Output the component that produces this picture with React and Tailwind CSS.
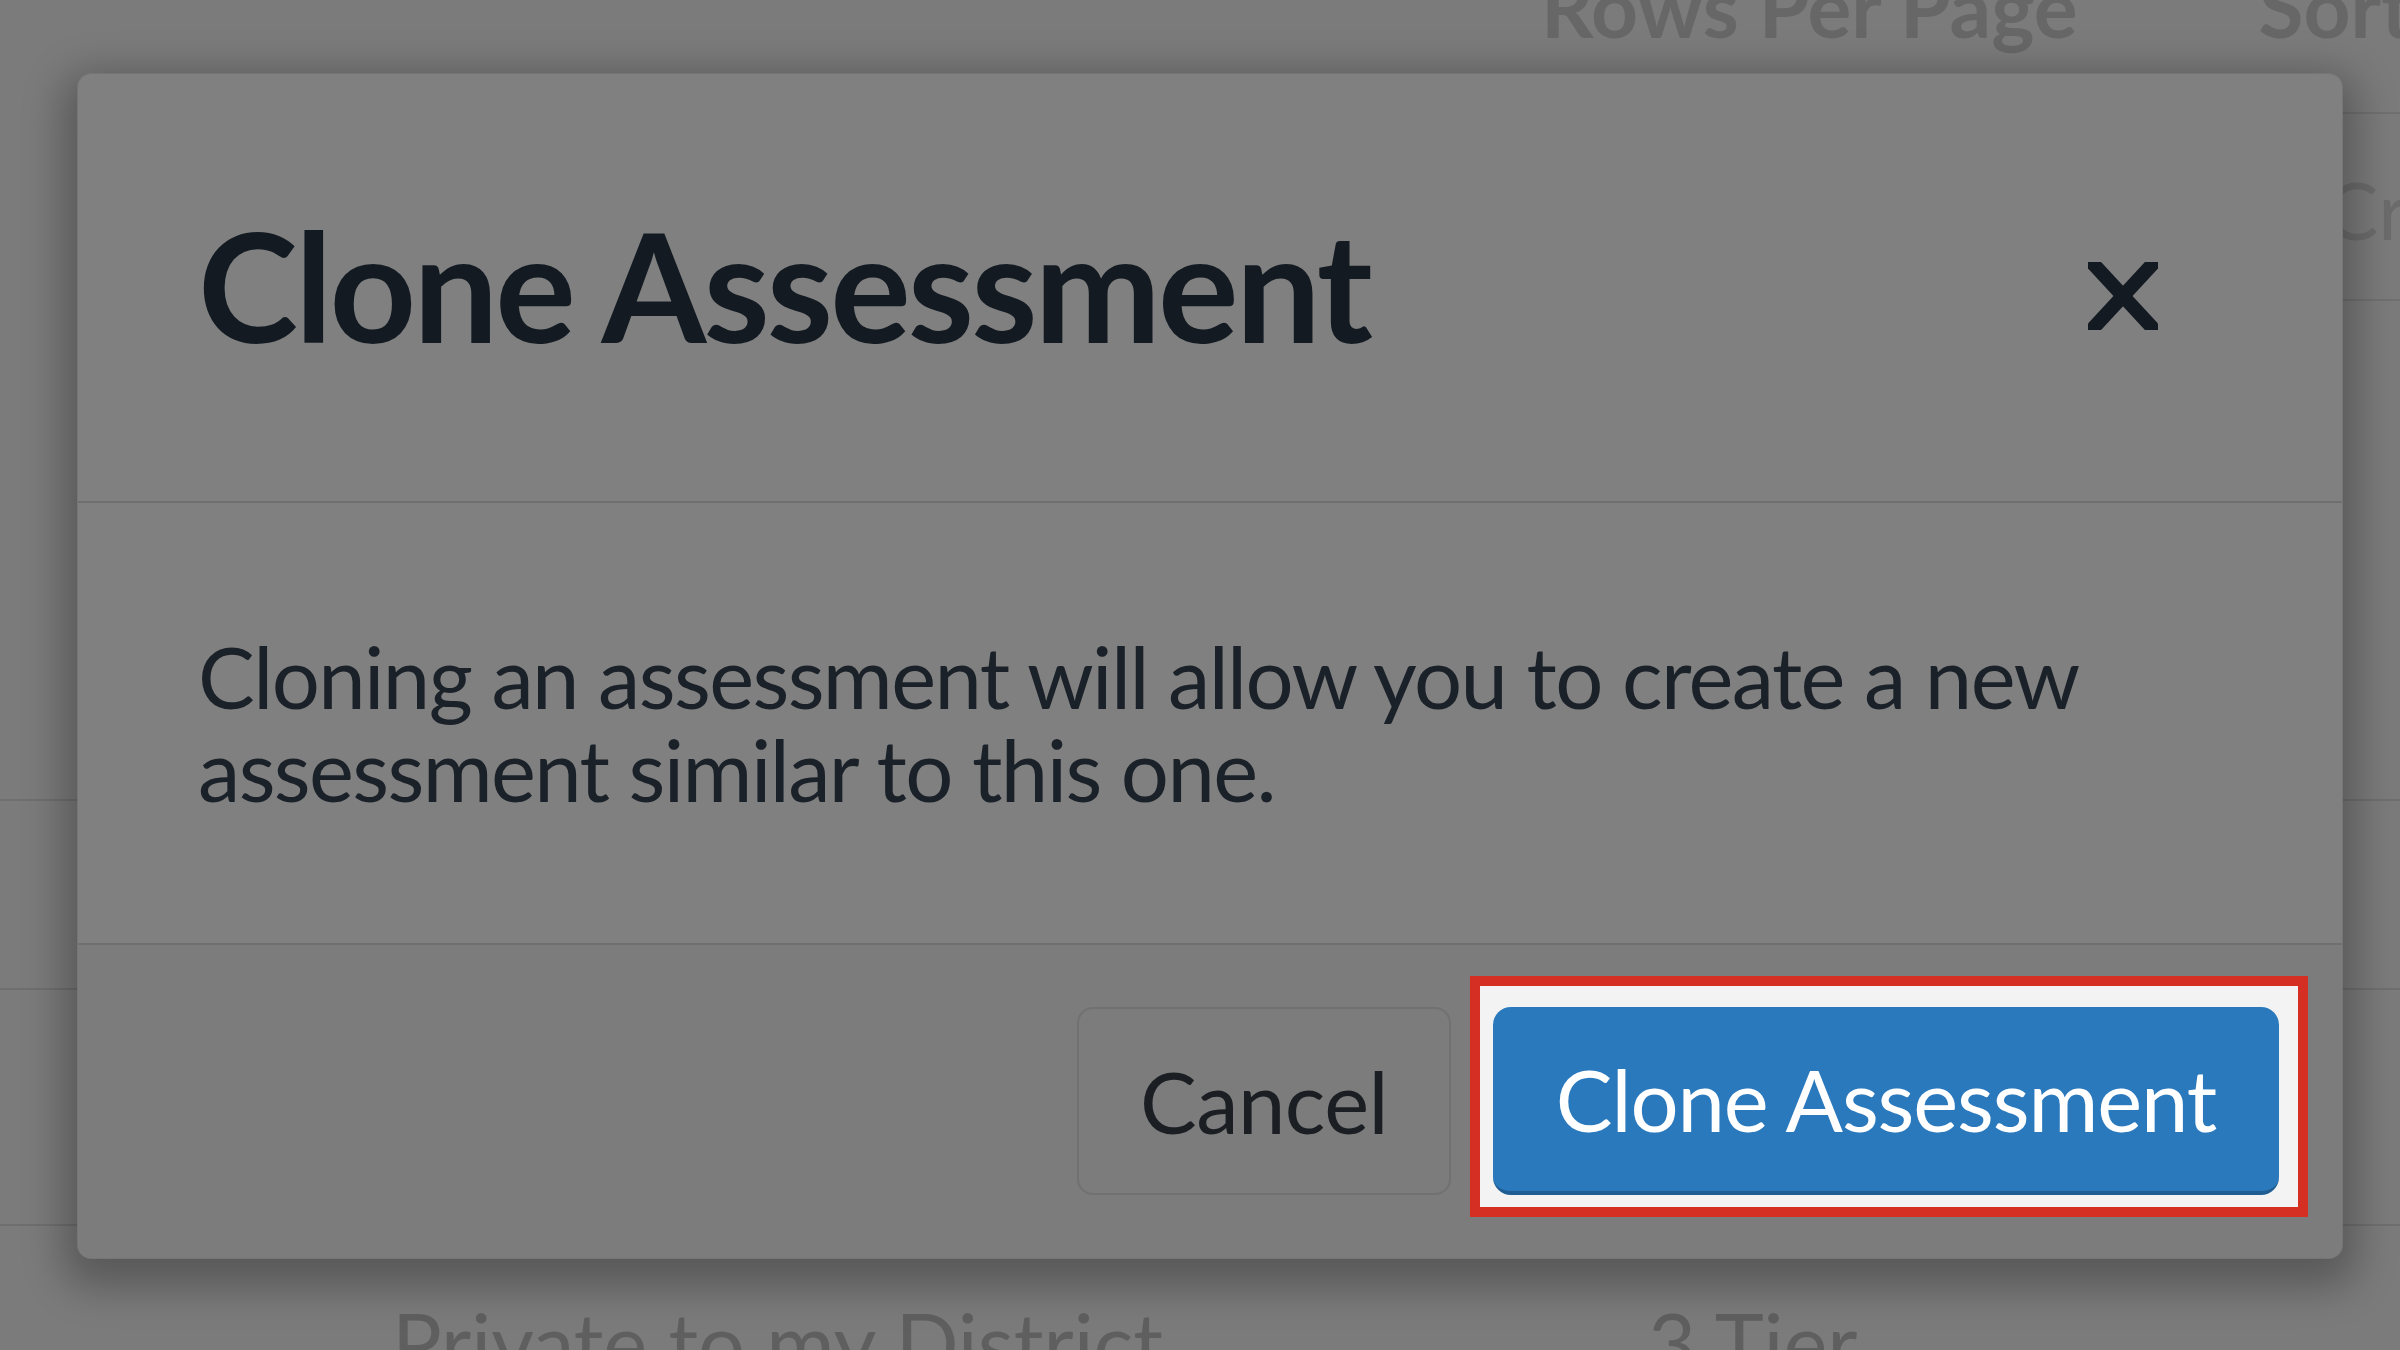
import { useState } from "react";

/* ─── Close glyph ─────────────────────────────────────────── */
function CloseIcon() {
  return (
    <svg viewBox="0 0 70 68" className="h-[68px] w-[70px]">
      <defs>
        <clipPath id="x-box">
          <rect x="0" y="0" width="70" height="68" />
        </clipPath>
      </defs>
      <g clipPath="url(#x-box)" stroke="#131a21" strokeWidth="14">
        <line x1="-2" y1="-6" x2="72" y2="74" />
        <line x1="72" y1="-6" x2="-2" y2="74" />
      </g>
    </svg>
  );
}

/* ─── The page behind the overlay ─────────────────────────── */
function PageBehind() {
  return (
    <div className="flex flex-col text-[#676767]">
      <div className="flex h-[112px] items-start overflow-hidden whitespace-nowrap pl-[1541px]">
        <span className="-mt-[35px] shrink-0 text-[82px] font-bold leading-none">Rows Per Page</span>
        <span className="-mt-[35px] ml-[181px] shrink-0 text-[82px] font-bold leading-none">Sort</span>
      </div>
      <div className="ml-[1400px] h-[189px] overflow-hidden whitespace-nowrap border-y-2 border-[#707070] pl-[925px] pt-[55px]">
        <span className="text-[80px] leading-none text-[#6c6c6c]">Created</span>
      </div>
      <div className="h-[498px]" />
      <div className="h-[189px] border-t-2 border-[#6f6f6f]" />
      <div className="h-[236px] border-t-2 border-[#6f6f6f]" />
      <div className="flex h-[140px] whitespace-nowrap border-t-2 border-[#6f6f6f] pl-[392px] pt-[75px] text-[83px] leading-none text-[#5f5f5f]">
        <span>Private to my District</span>
        <span className="ml-[485px]">3 Tier</span>
      </div>
    </div>
  );
}

/* ─── Modal ───────────────────────────────────────────────── */
function CloneModal({ onClose }) {
  return (
    <div className="w-[2266px] overflow-hidden rounded-[14px] border border-[#757575] bg-[#808080] shadow-[0_14px_40px_14px_rgba(0,0,0,0.28)]">
      {/* Header */}
      <div className="flex h-[429px] items-center justify-between border-b-2 border-[#6f6f6f] pl-[120px] pr-[184px]">
        <h2 className="-mt-[6px] text-[151px] font-bold leading-none tracking-[-3px] text-[#131a21]">
          Clone Assessment
        </h2>
        <button onClick={onClose} className="mt-[16px] flex">
          <CloseIcon />
        </button>
      </div>

      {/* Body */}
      <div className="px-[120px] py-[127px]">
        <p className="text-[85px] leading-[93px] tracking-[-1.6px] text-[#1b2128]">
          Cloning an assessment will allow you to create a new assessment similar to this one.
        </p>
      </div>

      {/* Footer */}
      <div className="flex items-center justify-end gap-[42px] border-t-2 border-[#6f6f6f] bg-[#7b7c7b] pb-[63px] pl-[64px] pr-[63px] pt-[62px]">
        <button className="h-[188px] w-[374px] rounded-[16px] border-2 border-[#717171] text-[85px] leading-none tracking-[-0.5px] text-[#1b1f24]">
          Cancel
        </button>
        <div className="relative flex">
          {/* highlight annotation */}
          <span className="absolute -bottom-[22px] -left-[23px] -right-[29px] -top-[31px] border-[10px] border-[#d42f22] bg-[#f2f3f2]" />
          <button className="relative h-[188px] w-[786px] rounded-[18px] border-b-4 border-[#1f5d92] bg-[#2b79bd] text-[85px] leading-none tracking-[-1.1px] text-white">
            Clone Assessment
          </button>
        </div>
      </div>
    </div>
  );
}

export default function App() {
  const [open, setOpen] = useState(true);
  return (
    <div className="relative h-[1350px] w-[2400px] overflow-hidden bg-[#7b7b7b] font-[Lato,sans-serif]">
      <PageBehind />
      {open && (
        <div className="absolute inset-0 flex items-start pl-[77px] pt-[73px]">
          <CloneModal onClose={() => setOpen(false)} />
        </div>
      )}
    </div>
  );
}
